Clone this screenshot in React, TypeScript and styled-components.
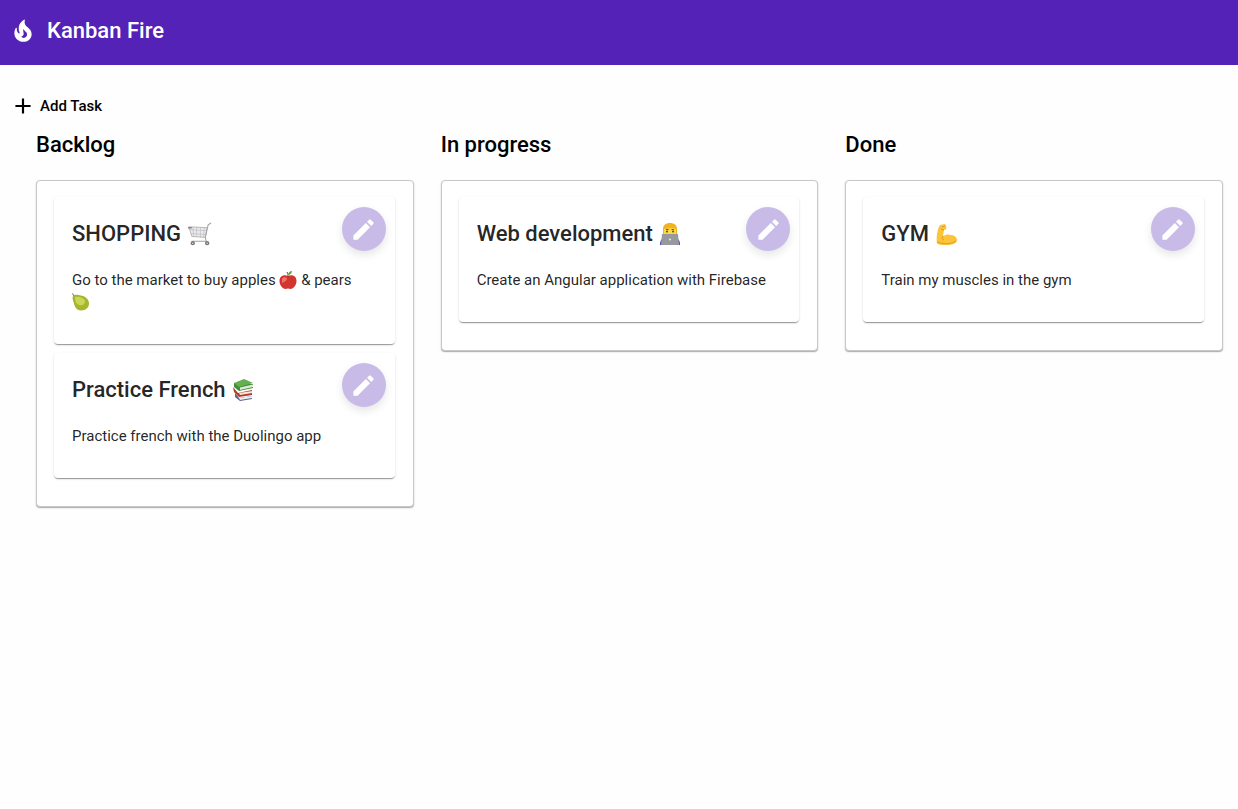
import React from 'react';
import styled, { createGlobalStyle } from 'styled-components';
import { MdAdd, MdEdit } from 'react-icons/md';

const GlobalStyle = createGlobalStyle`
  * { box-sizing: border-box; }
  body {
    margin: 0;
    background: #fefefe;
    color: #000;
    font-family: Roboto, "Liberation Sans", sans-serif;
  }
`;

const Toolbar = styled.header`
  display: flex;
  align-items: center;
  gap: 11px;
  height: 65px;
  padding: 0 10px 4px;
  background: #5522b7;
  color: #fff;
`;

const FlameIcon = styled.svg`
  width: 26px;
  height: 26px;
  fill: currentColor;
`;

const Brand = styled.h1`
  margin: 0;
  font-size: 22px;
  line-height: 28px;
  font-weight: 500;
`;

const Content = styled.main`
  padding: 21px 15px 20px 10px;
`;

const AddButton = styled.button`
  display: flex;
  align-items: center;
  gap: 4px;
  height: 40px;
  padding: 0;
  border: 0;
  background: none;
  color: #000;
  font: 500 15px/40px Roboto, "Liberation Sans", sans-serif;
  cursor: pointer;
`;

const Board = styled.div`
  display: grid;
  grid-template-columns: repeat(3, minmax(0, 1fr));
  align-items: start;
  gap: 27px;
  padding: 3px 0 0 26px;
`;

const LaneTitle = styled.h2`
  margin: 0 0 20px;
  font-size: 22px;
  line-height: 31px;
  font-weight: 500;
`;

const LaneList = styled.ul`
  display: grid;
  gap: 9px;
  margin: 0;
  padding: 16px 18px 28px 17px;
  list-style: none;
  border: 1px solid #c8c8c8;
  border-radius: 4px;
  background: #fff;
  box-shadow: 0 1px 1px rgba(0, 0, 0, 0.28), 0 1px 3px rgba(0, 0, 0, 0.08);
`;

const Card = styled.li`
  position: relative;
  padding: 21px 18px 31px;
  border-radius: 4px;
  background: #fff;
  color: rgba(0, 0, 0, 0.87);
  box-shadow: 0 2px 1px -1px rgba(0, 0, 0, 0.24), 0 1px 1px rgba(0, 0, 0, 0.16),
    0 1px 3px rgba(0, 0, 0, 0.1);
`;

const CardTitle = styled.h3`
  display: flex;
  align-items: center;
  gap: 6px;
  margin: 0 0 19px;
  font-size: 22px;
  line-height: 32px;
  font-weight: 500;
`;

const CardText = styled.p`
  margin: 0;
  padding-right: 8px;
  font-size: 15px;
  line-height: 22px;
`;

const EditButton = styled.button`
  position: absolute;
  top: 10px;
  right: 9px;
  display: grid;
  place-items: center;
  width: 44px;
  height: 44px;
  padding: 0;
  border: 0;
  border-radius: 50%;
  background: #c8bbe8;
  color: #fff;
  box-shadow: 0 4px 8px rgba(0, 0, 0, 0.1);
  cursor: pointer;
`;

const Emoji = styled.svg<{ $size: number }>`
  width: ${(p) => p.$size}px;
  height: ${(p) => p.$size}px;
  vertical-align: -4px;
`;

const Flame = () => (
  <FlameIcon viewBox="0 0 24 24" aria-hidden>
    <path d="M19.48 12.35c-1.57-4.08-7.16-4.3-5.81-10.23.1-.44-.37-.78-.75-.55C9.29 3.71 6.68 8 8.87 13.62c.18.46-.36.89-.75.59-1.81-1.37-2-3.34-1.84-4.75.06-.52-.62-.77-.91-.34C4.69 10.16 4 11.84 4 14.37c.38 5.6 5.11 7.32 6.81 7.54 2.43.31 5.06-.14 6.95-1.87 2.08-1.93 2.84-5.01 1.72-7.69zm-9.28 5.03c1.44-.35 2.18-1.39 2.38-2.31.33-1.43-.96-2.83-.09-5.09.33 1.87 3.27 3.04 3.27 5.08.08 2.53-2.66 4.7-5.56 2.32z" />
  </FlameIcon>
);

const Cart = () => (
  <Emoji $size={25} viewBox="0 0 26 26" role="img" aria-label="Shopping cart">
    <path d="M2 5l19 1-2 10-14-1z" fill="#ececee" stroke="#b5b5b9" />
    <path d="M6 5l1 10M10 5v10M14 6v10M18 6l-1 10M3 8l17 1M4 12l16 1" stroke="#bcbcc0" strokeWidth="0.7" />
    <path d="M25 1l-3 2-3 13 1 4H5" fill="none" stroke="#a3a3a8" strokeWidth="1.1" />
    <path d="M1 6h4" stroke="#85858a" strokeWidth="1.6" />
    <circle cx="6" cy="22" r="2.200" fill="#77777b" />
    <circle cx="21" cy="22" r="2.200" fill="#77777b" />
    <circle cx="6" cy="22" r="0.8" fill="#ddd" />
    <circle cx="21" cy="22" r="0.8" fill="#ddd" />
  </Emoji>
);

const Apple = () => (
  <Emoji $size={18} viewBox="0 0 18 18" role="img" aria-label="Apple">
    <path d="M9 5C5 3 0.500 5 0.500 10c0 4 3 8 6 8l2.500-.6 2.500.6c3 0 6-4 6-8 0-5-4.500-7-8.500-5z" fill="#d3352e" />
    <path d="M3 8c1-2 3-2 5-1 0 3-3 4-5 5z" fill="#ee7568" />
    <path d="M9 6c0-2 0-3-1-5" stroke="#6b4423" fill="none" />
    <path d="M9 4c0-2 2-4 4-4 0 2-2 4-4 4z" fill="#5f9e35" />
  </Emoji>
);

const Pear = () => (
  <Emoji $size={18} viewBox="0 0 18 18" role="img" aria-label="Pear">
    <path d="M0.500 0.500L2 3" stroke="#6d5a2c" />
    <path d="M1 3c2-2 5-1.500 8-.5 5 1 8 4 8 8 0 4-3 7-8 7-4 0-6-3-7-7-1-3-2-5-1-7.500z" fill="#a5b52c" />
    <path d="M3 4c4-1 9 1 10 4 0 4-3 5-6 4-3-1-4-4-4-8z" fill="#cbd556" />
  </Emoji>
);

const Books = () => (
  <Emoji $size={22} viewBox="0 0 22 22" role="img" aria-label="Books">
    <path d="M3 14l4 5 13-2v3L8 22l-5-4z" fill="#59618f" />
    <path d="M7 19l13-2v2L8 21z" fill="#eee" />
    <path d="M1 8l5 6 14-3v5L7 18l-5-5z" fill="#b43b2b" />
    <path d="M7 14l13-2v2L8 16z" fill="#f4e6dc" />
    <path d="M2 4v4l5 4 14-3V5z" fill="#438e3c" />
    <path d="M2 4l10-4 9 4L7 8z" fill="#62b052" />
    <path d="M8 8.500l13-3v2.500L8 11z" fill="#dfe9d4" />
  </Emoji>
);

const Technologist = () => (
  <Emoji $size={22} viewBox="0 0 22 22" role="img" aria-label="Technologist">
    <path d="M1 22c0-4 1-6 4-7h12c3 1 4 3 4 7z" fill="#4c50c4" />
    <path d="M4 6c0-4 3-6 7-6s7 2 7 6v7H4z" fill="#eeb51f" />
    <path d="M5 6c5 0 6-2 12 0v4c0 3-3 5-6 5s-6-2-6-5z" fill="#ffd645" />
    <path d="M7 6.500h2.500M12.500 6.500H15" stroke="#8b5a14" />
    <circle cx="8" cy="8.500" r="0.9" fill="#55380f" />
    <circle cx="14" cy="8.500" r="0.9" fill="#55380f" />
    <path d="M3 11h16l1 11H2z" fill="#97999d" />
    <circle cx="11" cy="16.500" r="1" fill="#eee" />
  </Emoji>
);

const Biceps = () => (
  <Emoji $size={23} viewBox="0 0 23 23" role="img" aria-label="Flexed biceps">
    <path d="M5 2l5-1 1 2c1 2 0 4-2 4l-1 6c3-1 4-2 7-1 4 0 7 2 7 5 0 4-6 5-11 5-4 0-8 0-9-2-1-3 0-14 3-18z" fill="#fcc43a" />
    <path d="M8 13c-1 2-1 3 1 4M9 7L6 6M10 3L7 4M2 19c6 2 13 3 19-1" fill="none" stroke="#e09a22" strokeWidth="1" />
  </Emoji>
);

interface Task {
  title: string;
  icon: React.ReactNode;
  text: React.ReactNode;
}

const lanes: { name: string; tasks: Task[] }[] = [
  {
    name: 'Backlog',
    tasks: [
      { title: 'SHOPPING', icon: <Cart />, text: <>Go to the market to buy apples <Apple /> &amp; pears <Pear /></> },
      { title: 'Practice French', icon: <Books />, text: 'Practice french with the Duolingo app' },
    ],
  },
  {
    name: 'In progress',
    tasks: [{ title: 'Web development', icon: <Technologist />, text: 'Create an Angular application with Firebase' }],
  },
  { name: 'Done', tasks: [{ title: 'GYM', icon: <Biceps />, text: 'Train my muscles in the gym' }] },
];

export default function App() {
  return (
    <>
      <GlobalStyle />
      <Toolbar>
        <Flame />
        <Brand>Kanban Fire</Brand>
      </Toolbar>
      <Content>
        <AddButton type="button">
          <MdAdd size={26} aria-hidden />
          Add Task
        </AddButton>
        <Board>
          {lanes.map((lane) => (
            <section key={lane.name}>
              <LaneTitle>{lane.name}</LaneTitle>
              <LaneList>
                {lane.tasks.map((task) => (
                  <Card key={task.title}>
                    <CardTitle>{task.title}{task.icon}</CardTitle>
                    <CardText>{task.text}</CardText>
                    <EditButton type="button" aria-label={`Edit ${task.title}`}>
                      <MdEdit size={27} aria-hidden />
                    </EditButton>
                  </Card>
                ))}
              </LaneList>
            </section>
          ))}
        </Board>
      </Content>
    </>
  );
}
